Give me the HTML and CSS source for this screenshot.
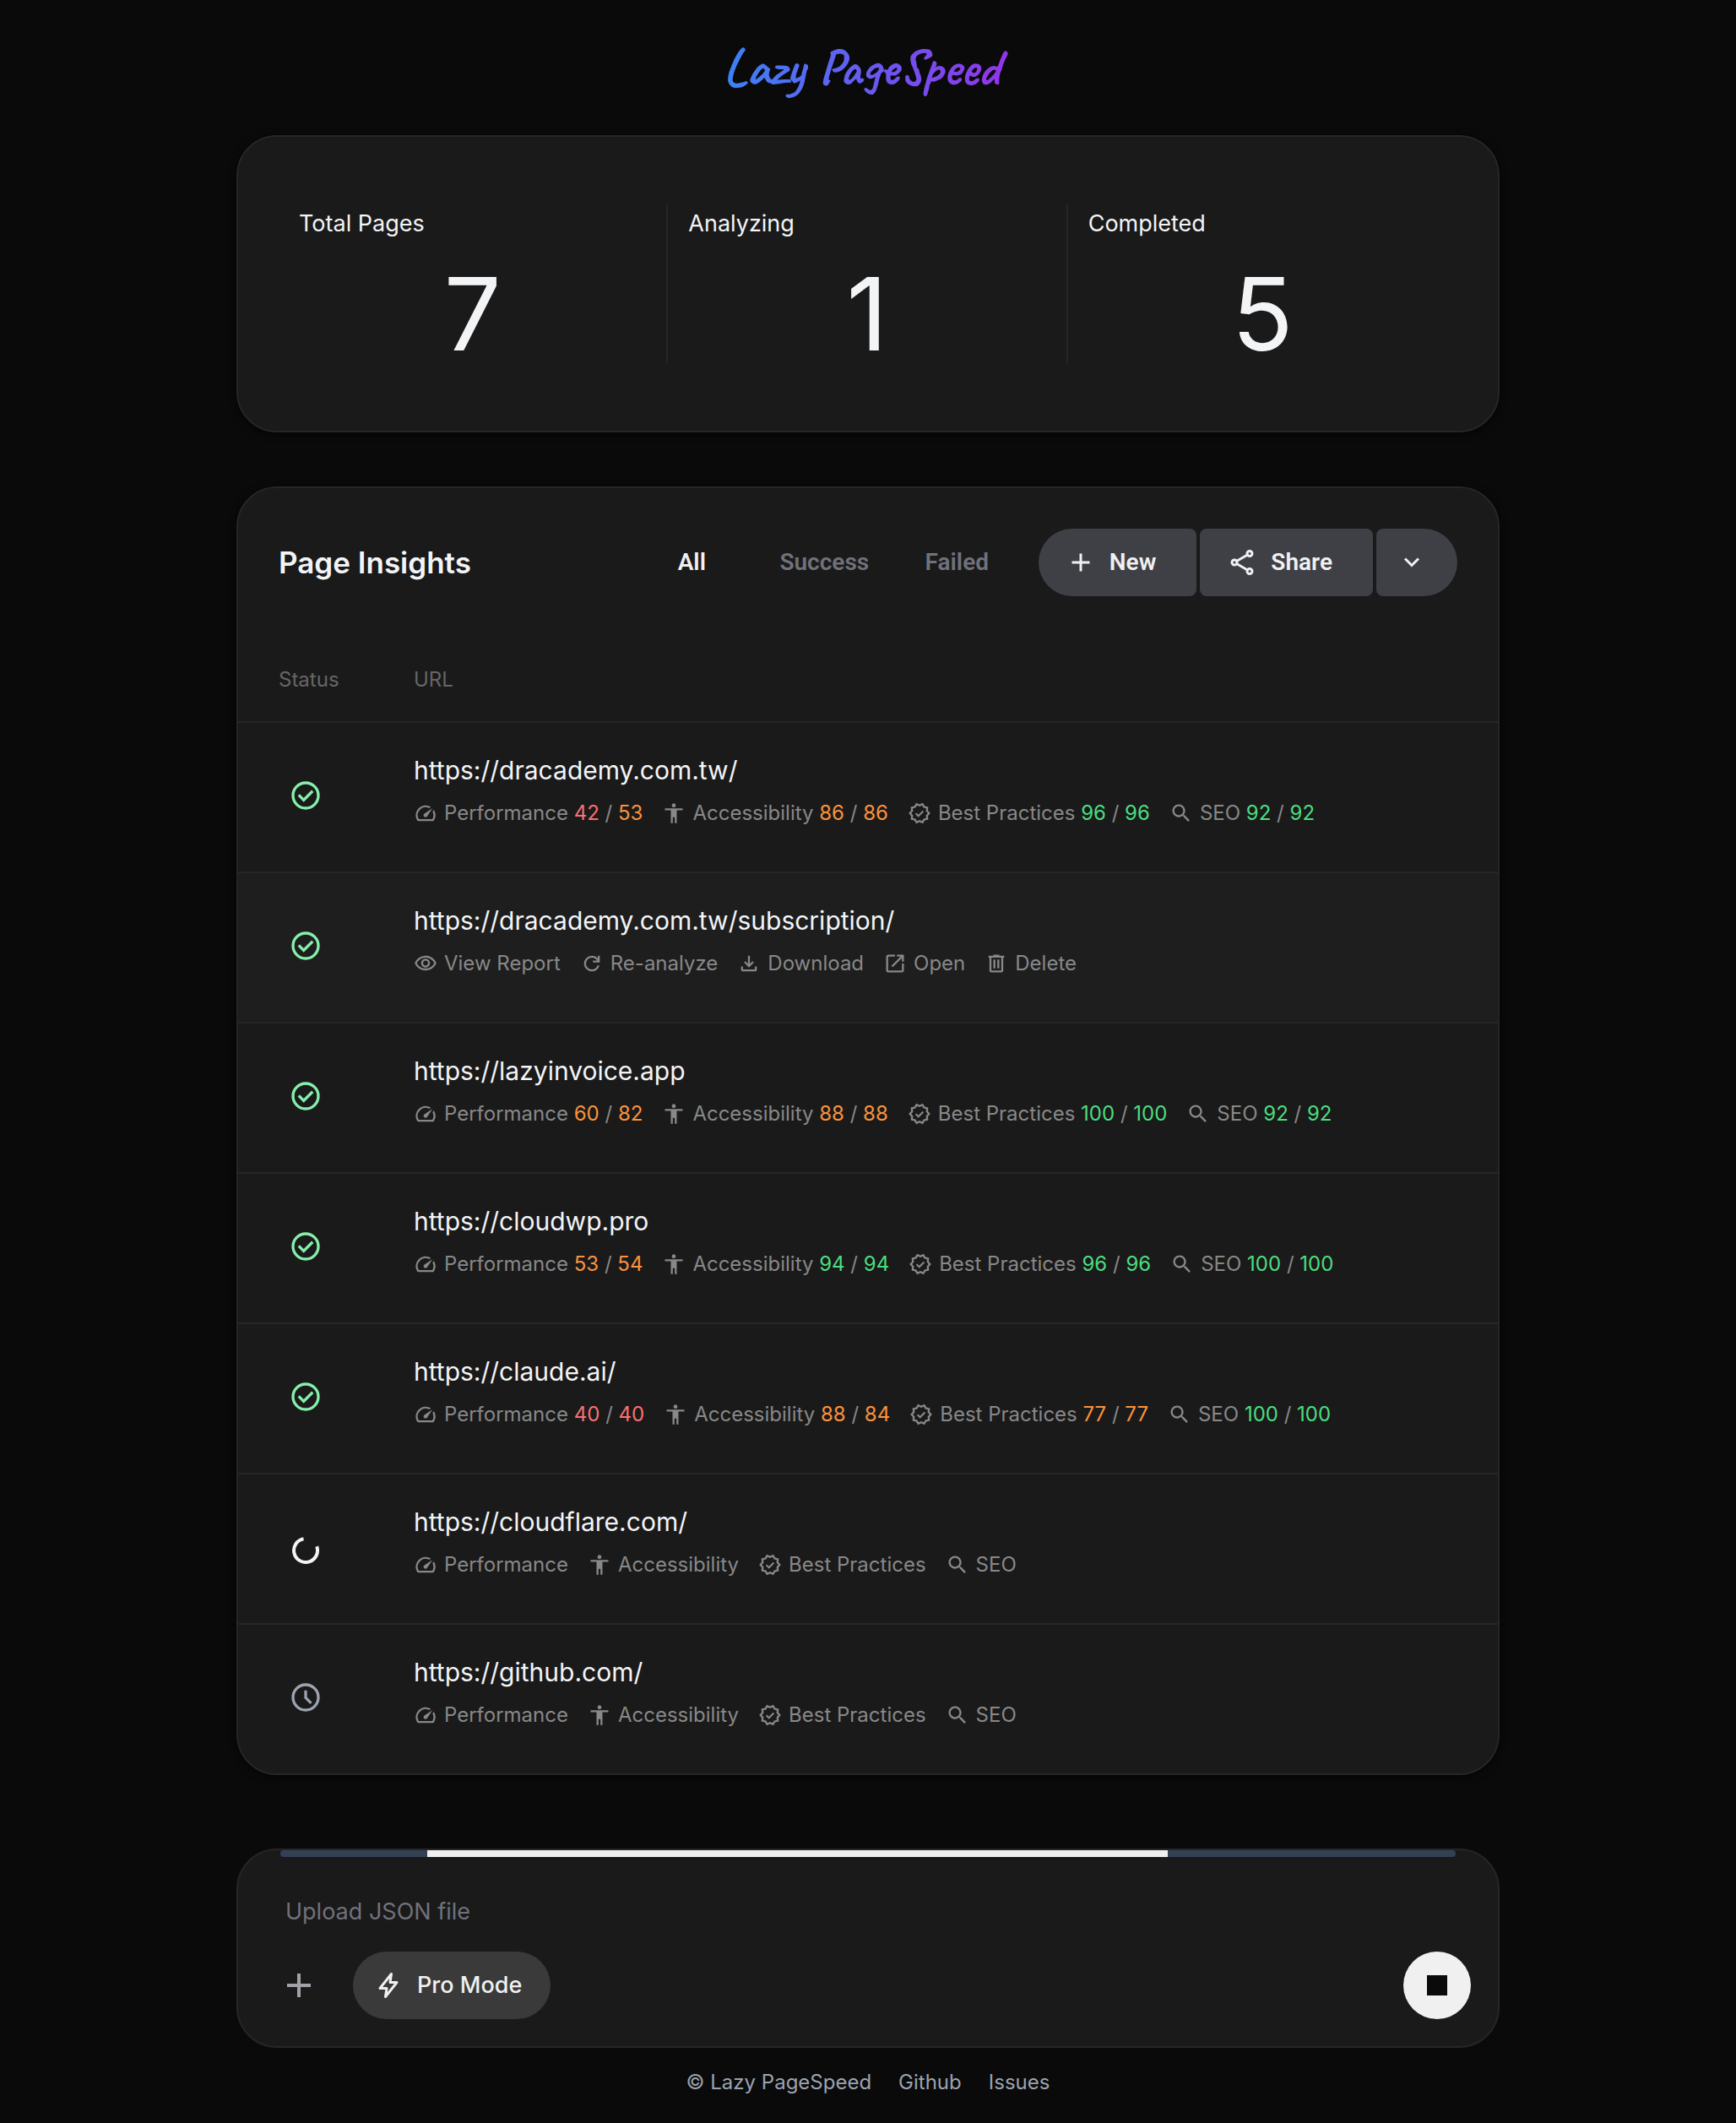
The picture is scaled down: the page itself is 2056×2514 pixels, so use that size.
FILE: index.html
```html
<!DOCTYPE html>
<html lang="en">
<head>
<meta charset="utf-8">
<meta name="viewport" content="width=device-width, initial-scale=1">
<title>Lazy PageSpeed</title>
<link rel="stylesheet" href="styles.css">
</head>
<body>
<svg class="sprite" aria-hidden="true">
  <symbol id="i-speed" viewBox="0 0 24 24"><path d="M20.38 8.57l-1.23 1.85a8 8 0 0 1-.22 7.58H5.07A8 8 0 0 1 15.58 6.85l1.85-1.23A10 10 0 0 0 3.35 19a2 2 0 0 0 1.72 1h13.85a2 2 0 0 0 1.74-1 10 10 0 0 0-.27-10.44zm-9.79 6.84a2 2 0 0 0 2.83 0l5.66-8.49-8.49 5.66a2 2 0 0 0 0 2.83z"/></symbol>
  <symbol id="i-access" viewBox="0 0 24 24"><path d="M12 2c1.1 0 2 .9 2 2s-.9 2-2 2-2-.9-2-2 .9-2 2-2zm9 7h-6v13h-2v-6h-2v6H9V9H3V7h18v2z"/></symbol>
  <symbol id="i-badge" viewBox="0 0 24 24"><path d="M23 12l-2.44-2.79.34-3.69-3.61-.82-1.89-3.2L12 2.96 8.6 1.5 6.71 4.69 3.1 5.5l.34 3.7L1 12l2.44 2.79-.34 3.7 3.61.82L8.6 22.5l3.4-1.47 3.4 1.46 1.89-3.19 3.61-.82-.34-3.69L23 12zm-4.51 2.11l.26 2.79-2.74.62-1.43 2.41L12 18.82l-2.58 1.11-1.43-2.41-2.74-.62.26-2.8L3.66 12l1.85-2.12-.26-2.78 2.74-.61 1.43-2.41L12 5.18l2.58-1.11 1.43 2.41 2.74.62-.26 2.79L20.34 12l-1.85 2.11z"/><path d="M8.2 12.2l2.7 2.6 4.900-5" fill="none" stroke="currentColor" stroke-width="1.8"/></symbol>
  <symbol id="i-search" viewBox="0 0 24 24"><path d="M15.5 14h-.79l-.28-.27C15.41 12.59 16 11.11 16 9.5 16 5.91 13.09 3 9.5 3S3 5.91 3 9.5 5.91 16 9.5 16c1.61 0 3.09-.59 4.23-1.57l.27.28v.79l5 4.99L20.49 19l-4.99-5zm-6 0C7.01 14 5 11.99 5 9.5S7.01 5 9.5 5 14 7.01 14 9.5 11.99 14 9.5 14z"/></symbol>
  <symbol id="i-eye" viewBox="0 0 24 24"><path d="M12 6c3.79 0 7.17 2.13 8.82 5.5C19.17 14.87 15.79 17 12 17s-7.17-2.13-8.82-5.5C4.83 8.13 8.21 6 12 6m0-2C7 4 2.73 7.11 1 11.5 2.73 15.89 7 19 12 19s9.27-3.11 11-7.5C21.27 7.11 17 4 12 4zm0 5c1.38 0 2.5 1.12 2.5 2.5S13.38 14 12 14s-2.5-1.12-2.5-2.5S10.62 9 12 9m0-2c-2.48 0-4.5 2.02-4.5 4.5S9.52 16 12 16s4.5-2.02 4.5-4.5S14.48 7 12 7z"/></symbol>
  <symbol id="i-refresh" viewBox="0 0 24 24"><path d="M12 20q-3.35 0-5.675-2.325T4 12t2.325-5.675T12 4q1.725 0 3.3.713T18 6.75V4h2v7h-7V9h4.2q-.8-1.4-2.187-2.2T12 6Q9.5 6 7.75 7.75T6 12t1.75 4.25T12 18q1.925 0 3.475-1.1T17.65 14h2.1q-.7 2.65-2.85 4.325T12 20"/></symbol>
  <symbol id="i-download" viewBox="0 0 24 24"><path d="M12 16l-5-5 1.4-1.45 2.6 2.6V4h2v8.15l2.6-2.6L17 11zm-6 4q-.825 0-1.412-.587T4 18v-3h2v3h12v-3h2v3q0 .825-.587 1.413T18 20z"/></symbol>
  <symbol id="i-open" viewBox="0 0 24 24"><path d="M5 21q-.825 0-1.412-.587T3 19V5q0-.825.588-1.412T5 3h7v2H5v14h14v-7h2v7q0 .825-.587 1.413T19 21zm4.7-5.3-1.4-1.4L17.6 5H14V3h7v7h-2V6.4z"/></symbol>
  <symbol id="i-delete" viewBox="0 0 24 24"><path d="M7 21q-.825 0-1.412-.587T5 19V6H4V4h5V3h6v1h5v2h-1v13q0 .825-.587 1.413T17 21zM17 6H7v13h10zM9 17h2V8H9zm4 0h2V8h-2z"/></symbol>
  <symbol id="i-done" viewBox="0 0 24 24"><path d="M10.6 16.6l7.05-7.05-1.4-1.4-5.65 5.65-2.85-2.85-1.4 1.4z"/><circle cx="12" cy="12" r="9" fill="none" stroke="currentColor" stroke-width="2"/></symbol>
  <symbol id="i-clock" viewBox="0 0 24 24"><g fill="none" stroke="currentColor" stroke-width="2"><circle cx="12" cy="12" r="9"/><path d="M12 7v5.2l3.9 3.9"/></g></symbol>
  <symbol id="i-spin" viewBox="0 0 40 40"><path d="M17.5 10.2A14 14 0 1 0 33.2 19.2" fill="none" stroke="currentColor" stroke-width="4"/></symbol>
  <symbol id="i-plus" viewBox="0 0 24 24"><path d="M11 5h2v6h6v2h-6v6h-2v-6H5v-2h6z"/></symbol>
  <symbol id="i-share" viewBox="0 0 24 24"><g fill="none" stroke="currentColor" stroke-width="2"><circle cx="18" cy="5" r="2"/><circle cx="6" cy="12" r="2"/><circle cx="18" cy="19" r="2"/><path d="M7.7 11l8.6-5M7.7 13l8.6 5"/></g></symbol>
  <symbol id="i-down" viewBox="0 0 24 24"><path d="M6.700 9l5.300 5.300 5.300-5.300" fill="none" stroke="currentColor" stroke-width="2"/></symbol>
  <symbol id="i-bolt" viewBox="0 0 36 36"><path d="M21.500 4.500L8 21.500h8L14.500 31.500 28 14.500h-8z" fill="none" stroke="currentColor" stroke-width="3" stroke-linejoin="round"/></symbol>
</svg>

<header class="site-header"><h1 class="logo">Lazy PageSpeed</h1></header>

<main class="content">
  <section class="card stats" aria-label="Summary">
    <div class="stat"><h2 class="stat-label">Total Pages</h2><p class="stat-value">7</p></div>
    <div class="stat"><h2 class="stat-label">Analyzing</h2><p class="stat-value">1</p></div>
    <div class="stat"><h2 class="stat-label">Completed</h2><p class="stat-value">5</p></div>
  </section>

  <section class="card insights">
    <div class="insights-head">
      <h2 class="insights-title">Page Insights</h2>
      <div class="tabs" role="tablist">
        <button class="tab active" role="tab" aria-selected="true">All</button>
        <button class="tab" role="tab" aria-selected="false">Success</button>
        <button class="tab" role="tab" aria-selected="false">Failed</button>
      </div>
      <div class="btn-group">
        <button class="btn"><svg class="icon-lg"><use href="#i-plus"/></svg>New</button>
        <button class="btn"><svg class="icon-lg"><use href="#i-share"/></svg>Share</button>
        <button class="btn btn-more" aria-label="More"><svg class="icon-lg"><use href="#i-down"/></svg></button>
      </div>
    </div>
    <table class="pages">
      <thead><tr><th class="col-status" scope="col">Status</th><th scope="col">URL</th></tr></thead>
      <tbody>
        <tr>
          <td class="state done"><svg class="icon-state"><use href="#i-done"/></svg></td>
          <td><a class="url" href="#">https://dracademy.com.tw/</a>
            <div class="meta">
              <span class="item"><svg class="icon"><use href="#i-speed"/></svg><span>Performance <b class="bad">42</b> / <b class="mid">53</b></span></span>
              <span class="item"><svg class="icon"><use href="#i-access"/></svg><span>Accessibility <b class="mid">86</b> / <b class="mid">86</b></span></span>
              <span class="item"><svg class="icon"><use href="#i-badge"/></svg><span>Best Practices <b class="good">96</b> / <b class="good">96</b></span></span>
              <span class="item"><svg class="icon"><use href="#i-search"/></svg><span>SEO <b class="good">92</b> / <b class="good">92</b></span></span>
            </div></td>
        </tr>
        <tr class="hovered">
          <td class="state done"><svg class="icon-state"><use href="#i-done"/></svg></td>
          <td><a class="url" href="#">https://dracademy.com.tw/subscription/</a>
            <div class="meta">
              <button class="item"><svg class="icon"><use href="#i-eye"/></svg>View Report</button>
              <button class="item"><svg class="icon"><use href="#i-refresh"/></svg>Re-analyze</button>
              <button class="item"><svg class="icon"><use href="#i-download"/></svg>Download</button>
              <button class="item"><svg class="icon"><use href="#i-open"/></svg>Open</button>
              <button class="item"><svg class="icon"><use href="#i-delete"/></svg>Delete</button>
            </div></td>
        </tr>
        <tr>
          <td class="state done"><svg class="icon-state"><use href="#i-done"/></svg></td>
          <td><a class="url" href="#">https://lazyinvoice.app</a>
            <div class="meta">
              <span class="item"><svg class="icon"><use href="#i-speed"/></svg><span>Performance <b class="mid">60</b> / <b class="mid">82</b></span></span>
              <span class="item"><svg class="icon"><use href="#i-access"/></svg><span>Accessibility <b class="mid">88</b> / <b class="mid">88</b></span></span>
              <span class="item"><svg class="icon"><use href="#i-badge"/></svg><span>Best Practices <b class="good">100</b> / <b class="good">100</b></span></span>
              <span class="item"><svg class="icon"><use href="#i-search"/></svg><span>SEO <b class="good">92</b> / <b class="good">92</b></span></span>
            </div></td>
        </tr>
        <tr>
          <td class="state done"><svg class="icon-state"><use href="#i-done"/></svg></td>
          <td><a class="url" href="#">https://cloudwp.pro</a>
            <div class="meta">
              <span class="item"><svg class="icon"><use href="#i-speed"/></svg><span>Performance <b class="mid">53</b> / <b class="mid">54</b></span></span>
              <span class="item"><svg class="icon"><use href="#i-access"/></svg><span>Accessibility <b class="good">94</b> / <b class="good">94</b></span></span>
              <span class="item"><svg class="icon"><use href="#i-badge"/></svg><span>Best Practices <b class="good">96</b> / <b class="good">96</b></span></span>
              <span class="item"><svg class="icon"><use href="#i-search"/></svg><span>SEO <b class="good">100</b> / <b class="good">100</b></span></span>
            </div></td>
        </tr>
        <tr>
          <td class="state done"><svg class="icon-state"><use href="#i-done"/></svg></td>
          <td><a class="url" href="#">https://claude.ai/</a>
            <div class="meta">
              <span class="item"><svg class="icon"><use href="#i-speed"/></svg><span>Performance <b class="bad">40</b> / <b class="bad">40</b></span></span>
              <span class="item"><svg class="icon"><use href="#i-access"/></svg><span>Accessibility <b class="mid">88</b> / <b class="mid">84</b></span></span>
              <span class="item"><svg class="icon"><use href="#i-badge"/></svg><span>Best Practices <b class="mid">77</b> / <b class="mid">77</b></span></span>
              <span class="item"><svg class="icon"><use href="#i-search"/></svg><span>SEO <b class="good">100</b> / <b class="good">100</b></span></span>
            </div></td>
        </tr>
        <tr>
          <td class="state"><svg class="icon-state"><use href="#i-spin"/></svg></td>
          <td><a class="url" href="#">https://cloudflare.com/</a>
            <div class="meta">
              <span class="item"><svg class="icon"><use href="#i-speed"/></svg>Performance</span>
              <span class="item"><svg class="icon"><use href="#i-access"/></svg>Accessibility</span>
              <span class="item"><svg class="icon"><use href="#i-badge"/></svg>Best Practices</span>
              <span class="item"><svg class="icon"><use href="#i-search"/></svg>SEO</span>
            </div></td>
        </tr>
        <tr>
          <td class="state waiting"><svg class="icon-state"><use href="#i-clock"/></svg></td>
          <td><a class="url" href="#">https://github.com/</a>
            <div class="meta">
              <span class="item"><svg class="icon"><use href="#i-speed"/></svg>Performance</span>
              <span class="item"><svg class="icon"><use href="#i-access"/></svg>Accessibility</span>
              <span class="item"><svg class="icon"><use href="#i-badge"/></svg>Best Practices</span>
              <span class="item"><svg class="icon"><use href="#i-search"/></svg>SEO</span>
            </div></td>
        </tr>
      </tbody>
    </table>
  </section>

  <form class="card composer">
    <div class="progress" role="progressbar" aria-label="Analyzing pages"><div class="progress-bar"></div></div>
    <input class="composer-input" type="text" placeholder="Upload JSON file" aria-label="Upload JSON file">
    <div class="composer-actions">
      <button class="round add" type="button" aria-label="Add file"><svg class="icon-add"><use href="#i-plus"/></svg></button>
      <button class="pro" type="button"><svg class="icon-lg"><use href="#i-bolt"/></svg>Pro Mode</button>
      <button class="round stop" type="button" aria-label="Stop"><span class="stop-mark"></span></button>
    </div>
  </form>
</main>

<footer class="site-footer">
  <a href="#">© Lazy PageSpeed</a>
  <a href="#">Github</a>
  <a href="#">Issues</a>
</footer>
</body>
</html>
```
FILE: styles.css
```css
* { box-sizing: border-box; }
body {
  margin: 0;
  background: #0a0a0a;
  color: #f3f4f6;
  font-family: Inter, "Liberation Sans", sans-serif;
  font-size: 24px;
  line-height: 36px;
}
h1, h2, p { margin: 0; font-weight: 400; }
a { color: inherit; text-decoration: none; }
button {
  padding: 0;
  border: 0;
  background: none;
  color: inherit;
  font: inherit;
  cursor: pointer;
}
svg { display: block; flex: none; fill: currentColor; }
.sprite { position: absolute; width: 0; height: 0; }

.icon { width: 28px; height: 28px; }
.icon-lg { width: 36px; height: 36px; }
.icon-state { width: 40px; height: 40px; }
.icon-add { width: 48px; height: 48px; }

.site-header {
  display: flex;
  align-items: center;
  justify-content: center;
  height: 160px;
}
.logo {
  padding-right: 16px;
  font-family: Caveat, cursive;
  font-weight: 700;
  font-size: 63px;
  line-height: 80px;
  background: linear-gradient(to right, #3b82f6, #9333ea);
  -webkit-background-clip: text;
  background-clip: text;
  color: transparent;
}

.content {
  width: 100%;
  max-width: 1496px;
  margin: 0 auto;
}
.card {
  background: #1a1a1a;
  border: 2px solid #262626;
  border-radius: 48px;
  box-shadow: 0 2px 10px rgba(0, 0, 0, 0.7);
}

.stats {
  display: grid;
  grid-template-columns: 77fr 79fr 77fr;
  padding: 80px 48px;
}
.stat { padding: 0 24px; border-right: 2px solid #262626; }
.stat:last-child { border-right: 0; }
.stat-label { font-size: 27px; line-height: 46px; }
.stat-value {
  margin-top: 26px;
  font-size: 120px;
  line-height: 116px;
  text-align: center;
}

.insights { margin-top: 64px; overflow: hidden; }
.insights-head {
  display: flex;
  align-items: center;
  padding: 48px 48px 0;
}
.insights-title {
  margin-right: auto;
  font-size: 35px;
  line-height: 48px;
  font-weight: 600;
}
.tabs {
  display: grid;
  grid-template-columns: repeat(3, 157px);
  margin-right: 18px;
}
.tab, .btn {
  height: 80px;
  font-family: Roboto, "Liberation Sans", sans-serif;
  font-size: 28px;
  font-weight: 600;
}
.tab { color: #71717a; }
.tab.active { color: #f0f0f0; }
.btn-group { display: flex; gap: 4px; }
.btn {
  display: flex;
  align-items: center;
  gap: 16px;
  padding: 0 48px 0 32px;
  border-radius: 8px;
  background: #3f3f46;
  color: #f0f0f0;
}
.btn:first-child { border-radius: 40px 8px 8px 40px; }
.btn-more { padding: 0 36px 0 24px; border-radius: 8px 40px 40px 8px; }

.pages { width: 100%; border-spacing: 0; }
.pages th {
  height: 150px;
  padding: 50px 0 0;
  border-bottom: 2px solid #262626;
  color: #666666;
  font-weight: 400;
  text-align: left;
}
.pages .col-status { width: 208px; padding-left: 48px; }
.pages td {
  height: 178px;
  padding: 32px 48px 0 0;
  border-bottom: 2px solid #262626;
  vertical-align: top;
}
.pages tr:last-child td { border-bottom: 0; height: 176px; }
.pages .state { padding: 66px 0 0 60px; }
.hovered { background: #1e1e1e; }
.done { color: #86efac; }
.waiting { color: #9ca3af; }
.url { display: block; font-size: 30px; line-height: 48px; }
.meta {
  display: flex;
  gap: 23px;
  margin-top: 8px;
  color: #888888;
  line-height: 38px;
}
.item { display: flex; align-items: center; gap: 8px; white-space: nowrap; }
.item b { font-weight: 400; }
.bad { color: #f87171; }
.mid { color: #fb923c; }
.good { color: #4ade80; }

.composer { margin-top: 87px; padding-bottom: 32px; box-shadow: none; }
.progress {
  height: 8px;
  margin: 0 50px;
  border-radius: 4px;
  background: #334155;
}
.progress-bar {
  width: 63%;
  height: 8px;
  margin-left: 12.5%;
  background: #f0f0f0;
}
.composer-input {
  display: block;
  width: 100%;
  height: 44px;
  margin-top: 42px;
  padding: 0 56px;
  border: 0;
  outline: 0;
  background: none;
  color: #f0f0f0;
  font: inherit;
  font-size: 27px;
}
.composer-input::placeholder { color: #71717a; opacity: 1; }
.composer-actions {
  display: flex;
  align-items: center;
  gap: 24px;
  margin-top: 26px;
  padding: 0 32px;
}
.round {
  display: flex;
  align-items: center;
  justify-content: center;
  width: 80px;
  height: 80px;
  border-radius: 40px;
}
.add { color: #a1a1aa; }
.pro {
  display: flex;
  align-items: center;
  gap: 16px;
  height: 80px;
  padding: 0 34px 0 24px;
  border-radius: 40px;
  background: #3a3a3a;
  color: #f0f0f0;
  font-size: 27px;
  font-weight: 500;
}
.stop { margin-left: auto; background: #f0f0f0; }
.stop-mark { width: 24px; height: 24px; background: #0a0a0a; }

.site-footer {
  display: flex;
  justify-content: center;
  gap: 32px;
  padding: 23px 0 30px;
  color: #9ca3af;
}
```
